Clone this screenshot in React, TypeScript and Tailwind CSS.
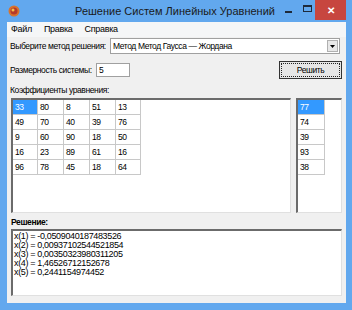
import { Fragment } from 'react';

const matrix = [
  [33, 80, 8, 51, 13],
  [49, 70, 40, 39, 76],
  [9, 60, 90, 18, 50],
  [16, 23, 89, 61, 16],
  [96, 78, 45, 18, 64],
];

const vector = [77, 74, 39, 93, 38];

const results = [
  'x(1) = -0,0509040187483526',
  'x(2) = 0,00937102544521854',
  'x(3) = 0,00350323980311205',
  'x(4) = 1,46526712152678',
  'x(5) = 0,2441154974452',
];

function Cell({ value, selected }: { value: number; selected?: boolean }) {
  return (
    <div
      className={`h-[15px] border-r border-b border-[#c8c8c8] pl-[2px] leading-[15px] ${
        selected ? 'bg-[#3399ff] text-white' : 'bg-white text-black'
      }`}
    >
      {value}
    </div>
  );
}

export default function App() {
  return (
    <div
      className="w-[352px] h-[310px] bg-[#62a8ee] flex flex-col overflow-hidden text-black whitespace-nowrap"
      style={{ fontFamily: '"Liberation Sans", Arial, sans-serif' }}
    >
      {/* Title bar */}
      <div className="h-[22px] relative flex items-center shrink-0">
        <svg className="absolute left-[8px] top-[5px]" width="12" height="12" viewBox="0 0 12 12">
          <circle cx="6" cy="6" r="5.5" fill="#d8732c" />
          <circle cx="6" cy="6" r="3.5" fill="#b53a2a" />
          <circle cx="5" cy="5" r="1.5" fill="#f3c14a" />
        </svg>
        <div className="w-full text-center text-[11px] text-[#1a1a1a] pt-[1px] pr-[2px]">
          Решение Систем Линейных Уравнений
        </div>
        <div className="absolute left-[285px] top-[11px] w-[7px] h-[2px] bg-[#1e2a3a]" />
        <div className="absolute left-[303px] top-[5px] w-[9px] h-[7px] border border-[#1e2a3a] border-t-2" />
        <div className="absolute left-[315px] top-0 w-[31px] h-[20px] bg-[#c7463f] flex items-center justify-center text-white text-[10px] font-bold">
          ✕
        </div>
      </div>

      {/* Client area */}
      <div className="ml-[7px] mr-[6px] h-[281px] bg-[#f0f0f0] flex flex-col text-[8.5px] tracking-[-0.4px]">
        {/* Menu */}
        <div className="h-[15px] bg-[#f5f6f7] flex items-center gap-[12px] pl-[4px] text-[9px] tracking-[-0.3px]">
          <span>Файл</span>
          <span>Правка</span>
          <span>Справка</span>
        </div>

        {/* Method */}
        <div className="flex items-center mt-[1px] h-[16px] pl-[3px]">
          <span className="w-[100px]">Выберите метод решения:</span>
          <div className="w-[230px] h-[16px] bg-white border border-[#a0a0a0] flex items-center">
            <span className="flex-1 pl-[2px]">Метод Метод Гаусса — Жордана</span>
            <div className="w-[11px] h-[12px] mr-[1px] bg-[#e8e8e8] border border-[#b0b0b0] flex items-center justify-center">
              <svg width="5" height="3" viewBox="0 0 5 3">
                <path d="M0 0h5L2.5 3z" fill="#000" />
              </svg>
            </div>
          </div>
        </div>

        {/* Size + button */}
        <div className="flex items-center h-[18px] mt-[7px] pl-[3px]">
          <span className="w-[86px]">Размерность системы:</span>
          <div className="w-[34px] h-[14px] bg-white border border-[#a0a0a0] pl-[2px] leading-[12px]">5</div>
          <div className="ml-auto mr-[4px] w-[63px] h-[18px] border border-[#333] bg-[#e6e6e6] p-[1px]">
            <div className="w-full h-full border border-dotted border-[#222] flex items-center justify-center">Решить</div>
          </div>
        </div>

        {/* Coefficients */}
        <div className="pl-[3px] mt-[6px] h-[11px] leading-[11px]">Коэффициенты уравнения:</div>
        <div className="flex h-[115px] mt-[2px] pl-[4px] pr-[4px] gap-[5px]">
          <div className="flex-1 bg-white border-t-2 border-l-2 border-[#6b6b6b] border-r border-b border-r-[#e0e0e0] border-b-[#e0e0e0]">
            <div className="grid grid-cols-[25px_26px_26px_26px_25px] w-fit">
              {matrix.map((row, r) => (
                <Fragment key={r}>
                  {row.map((v, c) => (
                    <Cell key={c} value={v} selected={r === 0 && c === 0} />
                  ))}
                </Fragment>
              ))}
            </div>
          </div>
          <div className="w-[46px] bg-white border-t-2 border-l-2 border-[#6b6b6b] border-r border-b border-r-[#e0e0e0] border-b-[#e0e0e0]">
            <div className="w-[27px]">
              {vector.map((v, i) => (
                <Cell key={i} value={v} selected={i === 0} />
              ))}
            </div>
          </div>
        </div>

        {/* Solution */}
        <div className="pl-[4px] mt-[4px] h-[11px] leading-[11px] font-bold">Решение:</div>
        <div className="mx-[4px] mt-[1px] h-[67px] bg-white border-t-2 border-l-2 border-[#6b6b6b] border-r border-b border-r-[#e0e0e0] border-b-[#e0e0e0] pl-[1px] pt-[1px] leading-[9px] text-[9px] tracking-[-0.35px]">
          {results.map((line) => (
            <div key={line}>{line}</div>
          ))}
        </div>
      </div>
    </div>
  );
}
